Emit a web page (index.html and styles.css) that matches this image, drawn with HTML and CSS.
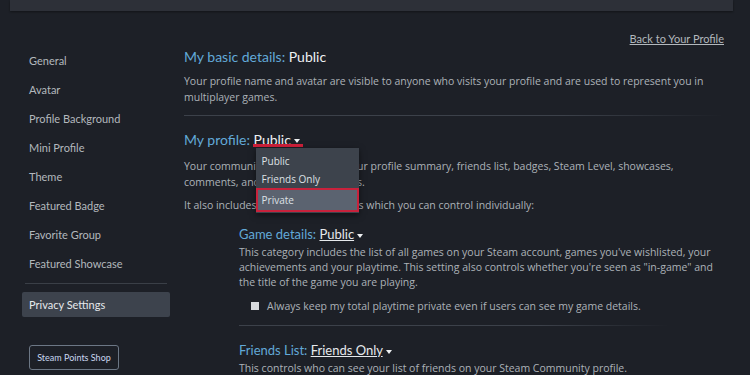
FILE: index.html
```html
<!DOCTYPE html>
<html lang="en">
<head>
    <meta charset="UTF-8">
    <title>Edit Profile - Privacy Settings</title>
    <link rel="stylesheet" href="styles.css">
</head>
<body>
    <div class="topbar"></div>

    <div class="page">
        <div class="sidebar">
            <a class="nav-item">General</a>
            <a class="nav-item">Avatar</a>
            <a class="nav-item">Profile Background</a>
            <a class="nav-item">Mini Profile</a>
            <a class="nav-item">Theme</a>
            <a class="nav-item">Featured Badge</a>
            <a class="nav-item">Favorite Group</a>
            <a class="nav-item">Featured Showcase</a>
            <div class="nav-divider"></div>
            <a class="nav-item active">Privacy Settings</a>
            <button class="points-btn">Steam Points Shop</button>
        </div>

        <div class="main">
            <div class="back-row"><a class="back-link">Back to Your Profile</a></div>

            <h2 class="setting-title first">My basic details: <span class="value">Public</span></h2>
            <p class="setting-desc">Your profile name and avatar are visible to anyone who visits your profile and are used to represent you in multiplayer games.</p>

            <div class="divider"></div>

            <h2 class="setting-title">My profile:
                <span class="dropdown-wrap">
                    <span class="value open">Public <span class="caret"></span></span>
                    <div class="dropdown">
                        <div class="dropdown-item">Public</div>
                        <div class="dropdown-item">Friends Only</div>
                        <div class="dropdown-item selected">Private</div>
                    </div>
                </span>
            </h2>
            <p class="setting-desc wide-gap">Your community profile includes your profile summary, friends list, badges, Steam Level, showcases, comments, and group memberships.</p>
            <p class="setting-desc">It also includes these other elements which you can control individually:</p>

            <div class="sub-setting">
                <h3 class="sub-title">Game details: <span class="value link">Public</span> <span class="caret"></span></h3>
                <p class="sub-desc">This category includes the list of all games on your Steam account, games you've wishlisted, your achievements and your playtime. This setting also controls whether you're seen as "in-game" and the title of the game you are playing.</p>
                <label class="check-row"><span class="checkbox"></span>Always keep my total playtime private even if users can see my game details.</label>
            </div>

            <div class="divider sub-divider"></div>

            <div class="sub-setting after-divider">
                <h3 class="sub-title">Friends List: <span class="value link">Friends Only</span> <span class="caret"></span></h3>
                <p class="sub-desc">This controls who can see your list of friends on your Steam Community profile.</p>
            </div>
        </div>
    </div>
</body>
</html>
```

FILE: styles.css
```css
body {
    margin: 0;
    background-color: #1d2027;
    font-family: Lato, "Open Sans", Arial, sans-serif;
    color: #acb2b8;
    overflow: hidden;
}
.topbar {
    height: 11px;
    margin: 0 17px 0 10px;
    background: #2d3038;
    box-shadow: 0 1px 2px rgba(0, 0, 0, 0.4);
}
.page {
    display: flex;
    padding-left: 22px;
}
.sidebar {
    width: 148px;
    padding-top: 35px;
    flex-shrink: 0;
}
.nav-item {
    display: block;
    padding-left: 7px;
    font-size: 11px;
    line-height: 29px;
    color: #b3b8bd;
}
.nav-divider {
    height: 1px;
    margin: 5px 3px 8px 3px;
    background: #3a3f47;
}
.nav-item.active {
    line-height: 25px;
    background: #3d434d;
    color: #e6e9ec;
    border-radius: 2px;
}
.points-btn {
    display: block;
    margin: 28px 0 0 7px;
    width: 90px;
    height: 25px;
    padding: 0;
    background: transparent;
    border: 1px solid #6c7785;
    border-radius: 3px;
    color: #c9d6f0;
    font-family: inherit;
    font-size: 9px;
}
.main {
    margin-left: 14px;
    width: 540px;
}
.back-row {
    text-align: right;
    padding-top: 20px;
    line-height: 12px;
}
.back-link {
    font-size: 11px;
    color: #b3b8bd;
    text-decoration: underline;
}
.setting-title {
    margin: 0;
    font-size: 14px;
    font-weight: normal;
    line-height: 18px;
    color: #62a9d8;
}
.setting-title.first {
    margin-top: 3px;
}
.value {
    color: #eef0f2;
}
.setting-desc {
    max-width: 520px;
    margin: 7px 0 0 0;
    font-family: "Open Sans", Arial, sans-serif;
    font-size: 10.5px;
    line-height: 16px;
}
.setting-desc.wide-gap {
    margin-top: 9px;
}
.divider {
    height: 1px;
    margin: 10px 0 15px 0;
    background: linear-gradient(to right, #3c414a 70%, rgba(60, 65, 74, 0));
}
.dropdown-wrap {
    position: relative;
}
.value.open {
    position: relative;
}
.value.open::after {
    content: "";
    position: absolute;
    left: -1px;
    right: -3px;
    bottom: 1px;
    height: 3px;
    background: #d0203a;
}
.caret {
    display: inline-block;
    width: 0;
    height: 0;
    border-left: 3px solid transparent;
    border-right: 3px solid transparent;
    border-top: 4px solid #eef0f2;
    vertical-align: middle;
}
.dropdown {
    position: absolute;
    left: 2px;
    top: 17px;
    width: 103px;
    padding: 4px 0 1px 0;
    background: #3d434c;
    box-shadow: 0 2px 6px rgba(0, 0, 0, 0.5);
    z-index: 2;
}
.dropdown-item {
    padding-left: 6px;
    font-family: "Open Sans", Arial, sans-serif;
    font-size: 10px;
    line-height: 18px;
    color: #dde1e5;
}
.dropdown-item.selected {
    background: #5b6370;
    border: 2px solid #c8223c;
    padding-left: 4px;
    line-height: 20px;
}
.sub-setting {
    width: 485px;
    margin-left: 55px;
    margin-top: 13px;
}
.sub-setting.after-divider {
    margin-top: 16px;
}
.sub-title {
    margin: 0;
    font-size: 13px;
    font-weight: normal;
    line-height: 16px;
    color: #62a9d8;
}
.value.link {
    color: #e6e9ec;
    text-decoration: underline;
}
.sub-desc {
    margin: 3px 0 0 0;
    font-family: "Open Sans", Arial, sans-serif;
    font-size: 10.5px;
    line-height: 15px;
}
.check-row {
    display: flex;
    align-items: center;
    margin: 8px 0 0 12px;
    font-family: "Open Sans", Arial, sans-serif;
    font-size: 10.5px;
    line-height: 16px;
}
.checkbox {
    width: 8px;
    height: 8px;
    margin-right: 8px;
    background: #d6d9dc;
}
.sub-divider {
    margin: 11px 0 0 55px;
    width: 430px;
}
```
